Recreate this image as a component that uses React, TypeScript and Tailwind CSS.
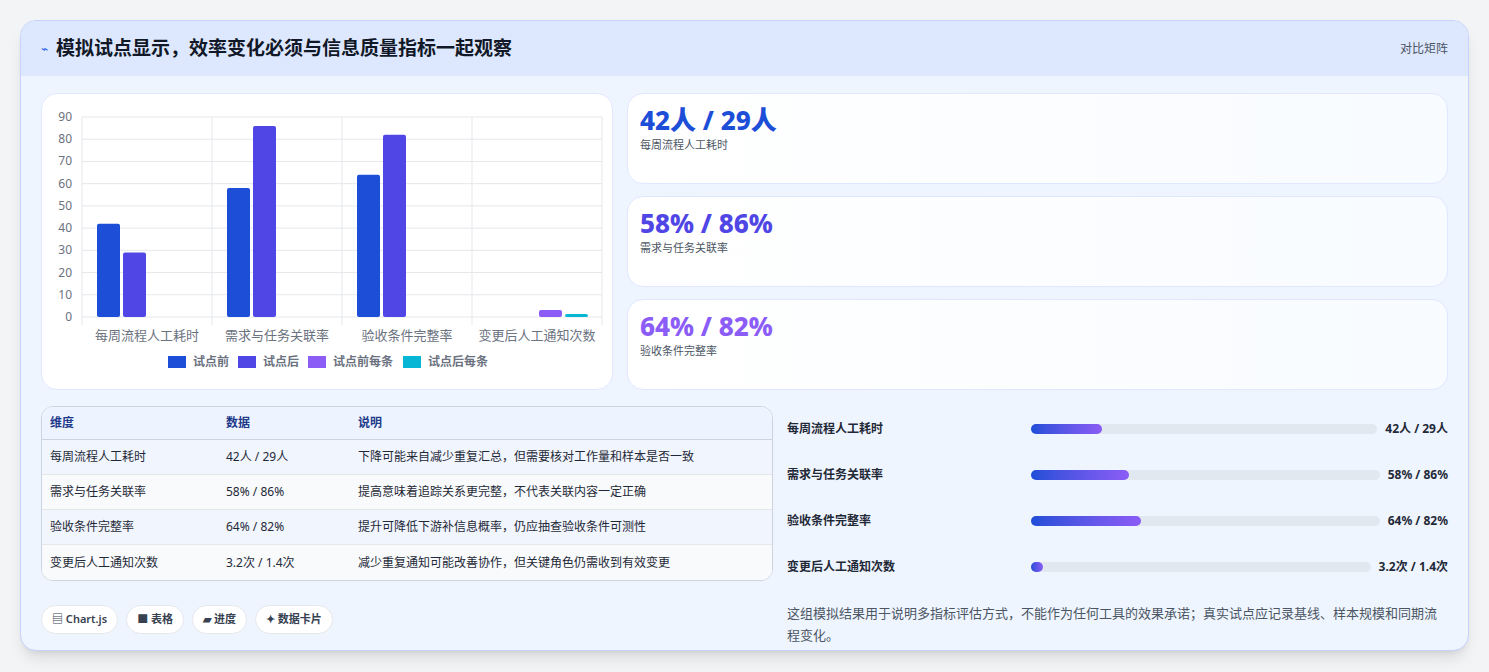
const font = { fontFamily: '"Noto Sans", "Noto Sans CJK SC", sans-serif' };

const series = [
  { name: "试点前", color: "#1d4ed8" },
  { name: "试点后", color: "#4f46e5" },
  { name: "试点前每条", color: "#8b5cf6" },
  { name: "试点后每条", color: "#06b6d4" },
];

const cats = [
  { label: "每周流程人工耗时", vals: [42, 29] },
  { label: "需求与任务关联率", vals: [58, 86] },
  { label: "验收条件完整率", vals: [64, 82] },
  { label: "变更后人工通知次数", vals: [0, 0, 3.2, 1.4] },
];

function Chart() {
  const x0 = 40, y0 = 223, h = 200, cw = 130;
  const ys = (v: number) => y0 - (v / 90) * h;
  return (
    <svg width="572" height="296" viewBox="0 0 572 296" style={font}>
      {[0, 10, 20, 30, 40, 50, 60, 70, 80, 90].map((t) => (
        <g key={t}>
          <line x1={x0} x2={560} y1={ys(t)} y2={ys(t)} stroke="#e5e7eb" />
          <text x={30} y={ys(t) + 4} fontSize="12" fill="#6b7280" textAnchor="end">{t}</text>
        </g>
      ))}
      {[0, 1, 2, 3, 4].map((i) => (
        <line key={i} x1={x0 + i * cw} x2={x0 + i * cw} y1={ys(90)} y2={y0 + 8} stroke="#e5e7eb" />
      ))}
      {cats.map((c, ci) =>
        c.vals.map((v, si) =>
          v > 0 ? (
            <rect key={ci + "-" + si} x={x0 + ci * cw + 15 + si * 26} y={ys(v)} width={23} height={y0 - ys(v)} rx={2} fill={series[si].color} />
          ) : null
        )
      )}
      {cats.map((c, ci) => (
        <text key={c.label} x={x0 + ci * cw + cw / 2} y={246} fontSize="13" fill="#6b7280" textAnchor="middle">{c.label}</text>
      ))}
      {series.map((s, i) => {
        const xs = [126, 196, 266, 361][i];
        return (
          <g key={s.name}>
            <rect x={xs} y={262} width={18} height={12} fill={s.color} />
            <text x={xs + 25} y={272} fontSize="12" fontWeight="600" fill="#6b7280">{s.name}</text>
          </g>
        );
      })}
    </svg>
  );
}

const stats = [
  { v: "42人 / 29人", l: "每周流程人工耗时", c: "text-[#1d4ed8]" },
  { v: "58% / 86%", l: "需求与任务关联率", c: "text-[#4f46e5]" },
  { v: "64% / 82%", l: "验收条件完整率", c: "text-[#8b5cf6]" },
];

const rows = [
  ["每周流程人工耗时", "42人 / 29人", "下降可能来自减少重复汇总，但需要核对工作量和样本是否一致"],
  ["需求与任务关联率", "58% / 86%", "提高意味着追踪关系更完整，不代表关联内容一定正确"],
  ["验收条件完整率", "64% / 82%", "提升可降低下游补信息概率，仍应抽查验收条件可测性"],
  ["变更后人工通知次数", "3.2次 / 1.4次", "减少重复通知可能改善协作，但关键角色仍需收到有效变更"],
];

const bars = [
  { l: "每周流程人工耗时", v: "42人 / 29人", p: 20.5 },
  { l: "需求与任务关联率", v: "58% / 86%", p: 28 },
  { l: "验收条件完整率", v: "64% / 82%", p: 31.5 },
  { l: "变更后人工通知次数", v: "3.2次 / 1.4次", p: 3.5 },
];

export default function App() {
  return (
    <div className="min-h-[672px] bg-[#f3f4f6] px-5 pt-5" style={font}>
      <div className="h-[631px] overflow-hidden rounded-2xl border border-[#c7d2fe] bg-[#eff5ff] shadow-lg">
        <div className="flex h-[55px] items-center justify-between bg-[#dde7fd] px-5">
          <div className="flex items-center gap-2">
            <span className="text-xs text-[#2563eb]">⌁</span>
            <span className="text-[19px] font-bold text-[#111827]">模拟试点显示，效率变化必须与信息质量指标一起观察</span>
          </div>
          <span className="text-xs text-[#4b5563]">对比矩阵</span>
        </div>
        <div className="px-5 pt-[17px]">
          <div className="flex gap-[14px]">
            <div className="h-[297px] w-[572px] rounded-2xl border border-[#e0e7ff] bg-white">
              <Chart />
            </div>
            <div className="flex flex-1 flex-col gap-[12px]">
              {stats.map((s) => (
                <div key={s.l} className="h-[91px] rounded-2xl border border-[#e0e7ff] bg-gradient-to-r from-white to-[#f8fbff] px-3 pt-[9px]">
                  <div className={`text-[26px] leading-[34px] font-extrabold ${s.c}`}>{s.v}</div>
                  <div className="text-[11px] text-[#4b5563]">{s.l}</div>
                </div>
              ))}
            </div>
          </div>
          <div className="mt-4 flex gap-[14px]">
            <div className="w-[732px]">
              <div className="overflow-hidden rounded-xl border border-[#cbd5e1] bg-white text-xs text-[#1f2937]">
                <div className="flex h-[33px] items-center border-b border-[#cbd5e1] bg-[#eef4ff] px-2 font-semibold text-[#1e3a8a]">
                  <div className="w-[176px]">维度</div>
                  <div className="w-[132px]">数据</div>
                  <div>说明</div>
                </div>
                {rows.map((r, i) => (
                  <div key={r[0]} className={`flex h-[35px] items-center px-2 ${i < 3 ? "border-b border-[#e5e7eb]" : ""} ${i % 2 === 1 ? "bg-[#f8fafc]" : "bg-[#f1f5fe]"}`}>
                    <div className="w-[176px]">{r[0]}</div>
                    <div className="w-[132px]">{r[1]}</div>
                    <div>{r[2]}</div>
                  </div>
                ))}
              </div>
              <div className="mt-6 flex gap-2 text-[11px] font-semibold text-[#374151]">
                {["▤ Chart.js", "■ 表格", "▰ 进度", "✦ 数据卡片"].map((t) => (
                  <span key={t} className="flex h-[29px] items-center rounded-full border border-[#e5e7eb] bg-white px-2.5">{t}</span>
                ))}
              </div>
            </div>
            <div className="flex-1">
              {bars.map((b) => (
                <div key={b.l} className="flex h-[46px] items-center text-xs font-semibold text-[#1f2937]">
                  <div className="w-[244px] shrink-0">{b.l}</div>
                  <div className="h-[10px] flex-1 rounded-full bg-[#e2e8f0]">
                    <div className="h-[10px] rounded-full bg-gradient-to-r from-[#1d4ed8] to-[#8b5cf6]" style={{ width: `${b.p}%`, minWidth: 10 }} />
                  </div>
                  <div className="ml-2 shrink-0 text-right font-bold">{b.v}</div>
                </div>
              ))}
              <p className="mt-3 text-[13px] leading-[22px] text-[#4b5563]">
                这组模拟结果用于说明多指标评估方式，不能作为任何工具的效果承诺；真实试点应记录基线、样本规模和同期流程变化。
              </p>
            </div>
          </div>
        </div>
      </div>
    </div>
  );
}
